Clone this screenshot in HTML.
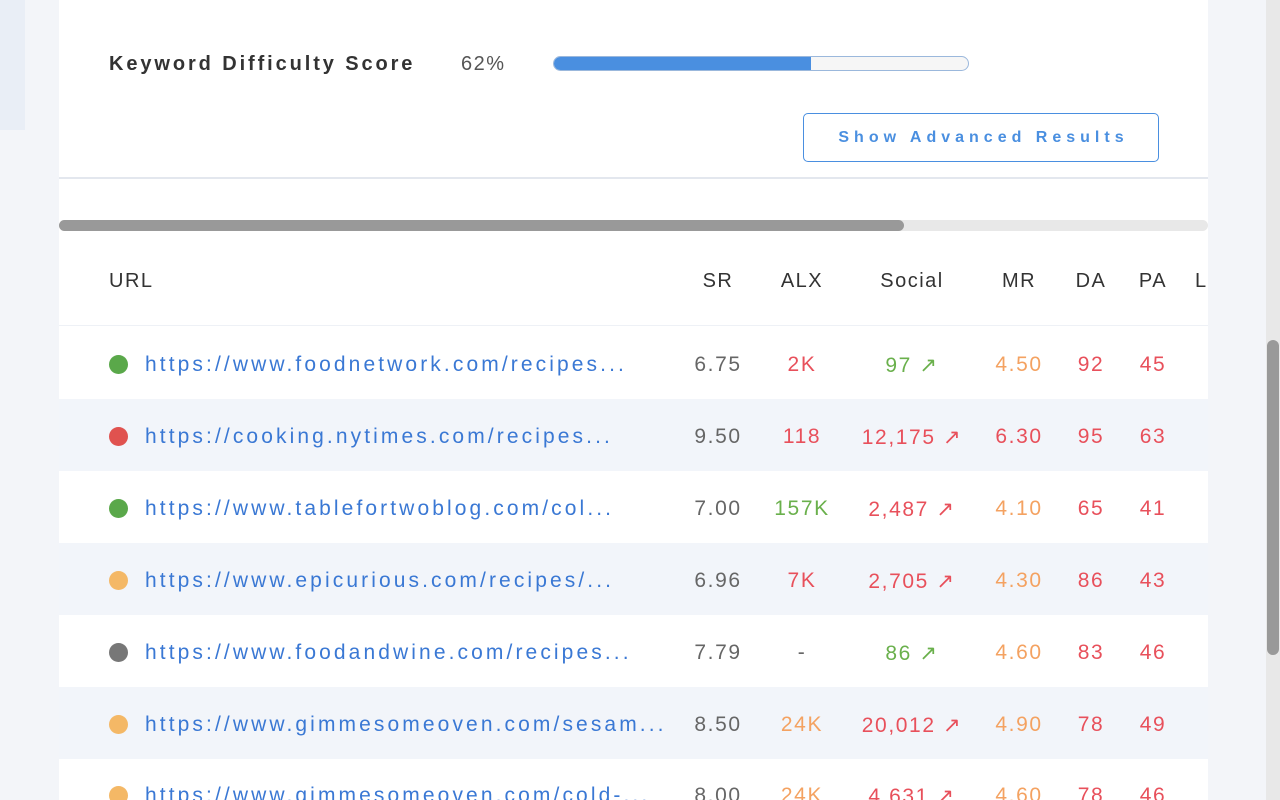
<!DOCTYPE html>
<html><head><meta charset="utf-8"><style>
body{margin:0;width:1280px;height:800px;overflow:hidden;background:#f3f5f9;font-family:"Liberation Sans",sans-serif;position:relative}
.bgl{position:absolute;left:0;top:0;width:25px;height:130px;background:#e9eef6}
.panel{position:absolute;left:59px;top:0;width:1149px;height:800px;background:#fff;overflow:hidden}
.kd{position:absolute;left:50px;top:53px;font-size:20px;font-weight:bold;color:#333;letter-spacing:2.9px}
.pct{position:absolute;left:402px;top:53px;font-size:20px;color:#555;letter-spacing:1.5px}
.bar{position:absolute;left:494px;top:56px;width:414px;height:13px;border:1px solid #9bb8dc;border-radius:8px;background:#f6f6f6;overflow:hidden}
.bar i{display:block;width:257px;height:13px;background:#4a8fe0}
.btn{position:absolute;left:744px;top:113px;width:356px;height:49px;border:1px solid #4a8fe0;border-radius:5px;color:#4a8fe0;font-size:16px;font-weight:bold;letter-spacing:5px;text-align:center;line-height:48px;box-sizing:border-box;padding-left:5px}
.hr{position:absolute;left:0;top:177px;width:1149px;height:2px;background:#e3e7ee}
.sb{position:absolute;left:0;top:220px;width:1149px;height:11px;background:#e8e8e8;border-radius:6px}
.sb i{display:block;width:845px;height:11px;background:#999;border-radius:6px}
.th{position:absolute;top:270px;font-size:20px;color:#333;letter-spacing:1.5px;width:120px;text-align:center}
.row{position:absolute;left:0;width:1149px;height:72px}
.row.alt{background:#f2f5fa}
.row span{position:absolute;top:26px;font-size:21px;letter-spacing:1.6px;white-space:nowrap;width:140px;text-align:center}
.row span.u{left:86px;width:auto;text-align:left;color:#3a78d4;letter-spacing:3.1px}
.dot{position:absolute;left:50px;top:28px;width:19px;height:19px;border-radius:50%}
.g{color:#6ab04c}.r{color:#e8505b}.o{color:#f4a261}.k{color:#666}
.c1{left:589px}.c2{left:673px}.c3{left:783px}.c4{left:890px}.c5{left:962px}.c6{left:1024px}
.vs{position:absolute;left:1266px;top:0;width:14px;height:800px;background:#e8e8e8}
.vs i{position:absolute;left:1px;top:340px;width:12px;height:315px;background:#999;border-radius:6px}
</style></head><body>
<div class="bgl"></div>
<div class="panel">
<div class="kd">Keyword Difficulty Score</div>
<div class="pct">62%</div>
<div class="bar"><i></i></div>
<div class="btn">Show Advanced Results</div>
<div class="hr"></div>
<div class="sb"><i></i></div>
<div class="th" style="left:50px;text-align:left">URL</div>
<div class="th" style="left:599px">SR</div>
<div class="th" style="left:683px">ALX</div>
<div class="th" style="left:793px">Social</div>
<div class="th" style="left:900px">MR</div>
<div class="th" style="left:972px">DA</div>
<div class="th" style="left:1034px">PA</div>
<div class="th" style="left:1136px;text-align:left">L</div>
<div style="position:absolute;left:0;top:325px;width:1149px;height:1px;background:#eef1f6"></div>

<div class="row" style="top:327px"><div class="dot" style="background:#5aa84a"></div><span class="u">https://www.foodnetwork.com/recipes...</span><span class="k c1">6.75</span><span class="r c2">2K</span><span class="g c3">97 ↗</span><span class="o c4">4.50</span><span class="r c5">92</span><span class="r c6">45</span></div>
<div class="row alt" style="top:399px"><div class="dot" style="background:#e0524f"></div><span class="u">https://cooking.nytimes.com/recipes...</span><span class="k c1">9.50</span><span class="r c2">118</span><span class="r c3">12,175 ↗</span><span class="r c4">6.30</span><span class="r c5">95</span><span class="r c6">63</span></div>
<div class="row" style="top:471px"><div class="dot" style="background:#5aa84a"></div><span class="u">https://www.tablefortwoblog.com/col...</span><span class="k c1">7.00</span><span class="g c2">157K</span><span class="r c3">2,487 ↗</span><span class="o c4">4.10</span><span class="r c5">65</span><span class="r c6">41</span></div>
<div class="row alt" style="top:543px"><div class="dot" style="background:#f4b866"></div><span class="u">https://www.epicurious.com/recipes/...</span><span class="k c1">6.96</span><span class="r c2">7K</span><span class="r c3">2,705 ↗</span><span class="o c4">4.30</span><span class="r c5">86</span><span class="r c6">43</span></div>
<div class="row" style="top:615px"><div class="dot" style="background:#777"></div><span class="u">https://www.foodandwine.com/recipes...</span><span class="k c1">7.79</span><span class="k c2">-</span><span class="g c3">86 ↗</span><span class="o c4">4.60</span><span class="r c5">83</span><span class="r c6">46</span></div>
<div class="row alt" style="top:687px"><div class="dot" style="background:#f4b866"></div><span class="u">https://www.gimmesomeoven.com/sesam...</span><span class="k c1">8.50</span><span class="o c2">24K</span><span class="r c3">20,012 ↗</span><span class="o c4">4.90</span><span class="r c5">78</span><span class="r c6">49</span></div>
<div class="row" style="top:758px"><div class="dot" style="background:#f4b866"></div><span class="u">https://www.gimmesomeoven.com/cold-...</span><span class="k c1">8.00</span><span class="o c2">24K</span><span class="r c3">4,631 ↗</span><span class="o c4">4.60</span><span class="r c5">78</span><span class="r c6">46</span></div>
</div>
<div class="vs"><i></i></div>
</body></html>
